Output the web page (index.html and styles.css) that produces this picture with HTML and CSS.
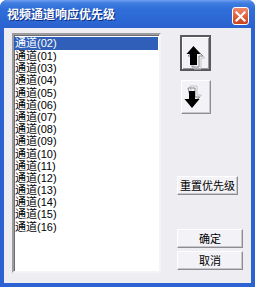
FILE: index.html
```html
<!DOCTYPE html>
<html lang="zh">
<head>
  <meta charset="UTF-8">
  <title>视频通道响应优先级</title>
  <link rel="stylesheet" href="styles.css">
</head>
<body>
  <div class="window">
    <div class="titlebar">
      <span class="title">视频通道响应优先级</span>
      <span class="close">
        <svg width="11" height="11" viewBox="0 0 11 11">
          <path d="M1.5 1.5 L9.5 9.5 M9.5 1.5 L1.5 9.5" stroke="#fff" stroke-width="2.2" stroke-linecap="square"/>
        </svg>
      </span>
    </div>

    <div class="client">
      <ul class="list">
        <li class="selected">通道(02)</li>
        <li>通道(01)</li>
        <li>通道(03)</li>
        <li>通道(04)</li>
        <li>通道(05)</li>
        <li>通道(06)</li>
        <li>通道(07)</li>
        <li>通道(08)</li>
        <li>通道(09)</li>
        <li>通道(10)</li>
        <li>通道(11)</li>
        <li>通道(12)</li>
        <li>通道(13)</li>
        <li>通道(14)</li>
        <li>通道(15)</li>
        <li>通道(16)</li>
      </ul>

      <div class="side">
        <button class="btn btn-up" type="button">
          <svg width="31" height="36" viewBox="0 0 31 36">
            <!-- trailing outlines -->
            <polygon points="15.5,14 23,21 19,21 19,32 12,32 12,21 8,21" fill="none" stroke="#c4c4c4" stroke-width="1"/>
            <polygon points="13.5,12 21,19 17,19 17,30 10,30 10,19 6,19" fill="none" stroke="#8a8a8a" stroke-width="1"/>
            <polygon points="11.5,9 18.5,17 15,17 15,28 8,28 8,17 4.5,17" fill="#000"/>
          </svg>
        </button>
        <button class="btn btn-down" type="button">
          <svg width="30" height="34" viewBox="0 0 30 34">
            <polygon points="8,5 15,5 15,14 19.5,14 12,22" fill="none" stroke="#c4c4c4" stroke-width="1"/>
            <polygon points="6,7 13,7 13,16 17.5,16 10,24" fill="none" stroke="#8a8a8a" stroke-width="1"/>
            <polygon points="7,10 13,10 13,18 17.5,18 10,27 2.5,18 7,18" fill="#000"/>
          </svg>
        </button>
        <button class="btn btn-reset" type="button">重置优先级</button>
        <button class="btn btn-ok" type="button">确定</button>
        <button class="btn btn-cancel" type="button">取消</button>
      </div>
    </div>
  </div>
</body>
</html>
```

FILE: styles.css
```css
/* XP style dialog */
body {
  margin: 0;
  font-family: "Liberation Sans", "Noto Sans CJK SC", sans-serif;
  background: #ffffff;
}

.window {
  width: 255px;
  height: 287px;
  display: flex;
  flex-direction: column;
  background: #2c62d2;
  border-radius: 7px 7px 0 0;
  overflow: hidden;
}

.titlebar {
  height: 28px;
  flex-shrink: 0;
  display: flex;
  justify-content: space-between;
  align-items: flex-start;
  padding: 0 6px 0 7px;
  background: linear-gradient(to bottom, #6f9ff0 0px, #3f7de0 3px, #2f6ed8 9px, #2c68d4 20px, #2a62cf 28px);
}

.title {
  margin-top: 6px;
  color: #ffffff;
  font-family: "Noto Sans CJK SC", sans-serif;
  font-size: 12px;
  font-weight: bold;
  line-height: 16px;
  text-shadow: 1px 1px 0 #0b2d86;
}

.close {
  margin-top: 7px;
  width: 17px;
  height: 18px;
  box-sizing: border-box;
  display: flex;
  align-items: center;
  justify-content: center;
  border: 1px solid #ffffff;
  border-radius: 3px;
  background: linear-gradient(to bottom, #f08a6c, #dd5a34 60%, #c9431f);
}

.client {
  flex: 1;
  margin: 0 4px 4px 4px;
  background: #eeedf2;
  display: flex;
  align-items: flex-start;
  padding: 5px 0 0 8px;
}

.list {
  list-style: none;
  margin: 0;
  padding: 2px 1px 0 0;
  width: 149px;
  height: 240px;
  box-sizing: border-box;
  background: #ffffff;
  border: 2px solid;
  border-color: #9c9ca0 #f4f4f6 #f4f4f6 #9c9ca0;
  box-shadow: inset 1px 1px 0 #6e6e72;
  overflow: hidden;
}

.list li {
  height: 12.2px;
  line-height: 12.2px;
  padding-left: 1px;
  font-size: 11px;
  color: #000000;
  white-space: nowrap;
}

.list li.selected {
  height: 13px;
  line-height: 13px;
  background: #2f5fb8;
  color: #ffffff;
}

.side {
  display: flex;
  flex-direction: column;
  align-items: flex-start;
  margin-left: 16px;
}

.btn {
  padding: 0;
  box-sizing: border-box;
  background: #f3f2f6;
  border: 1px solid;
  border-color: #ffffff #8e8e92 #8e8e92 #ffffff;
  box-shadow: inset -1px -1px 0 #c8c7cc;
  font-family: "Noto Sans CJK SC", sans-serif;
  font-size: 11px;
  color: #000000;
  line-height: 17px;
}

.btn svg {
  display: block;
}

.btn-up {
  margin: 2px 0 0 3px;
  width: 31px;
  height: 36px;
  border: 2px solid #5a5a5e;
  box-shadow: inset 1px 1px 0 #ffffff, inset -1px -1px 0 #9a9a9e, inset 2px 2px 0 #eeeeee;
}

.btn-down {
  margin: 9px 0 0 4px;
  width: 30px;
  height: 34px;
}

.btn-reset {
  margin-top: 62px;
  width: 61px;
  height: 19px;
}

.btn-ok {
  margin-top: 34px;
  width: 66px;
  height: 19px;
}

.btn-cancel {
  margin-top: 3px;
  width: 66px;
  height: 19px;
}
```
